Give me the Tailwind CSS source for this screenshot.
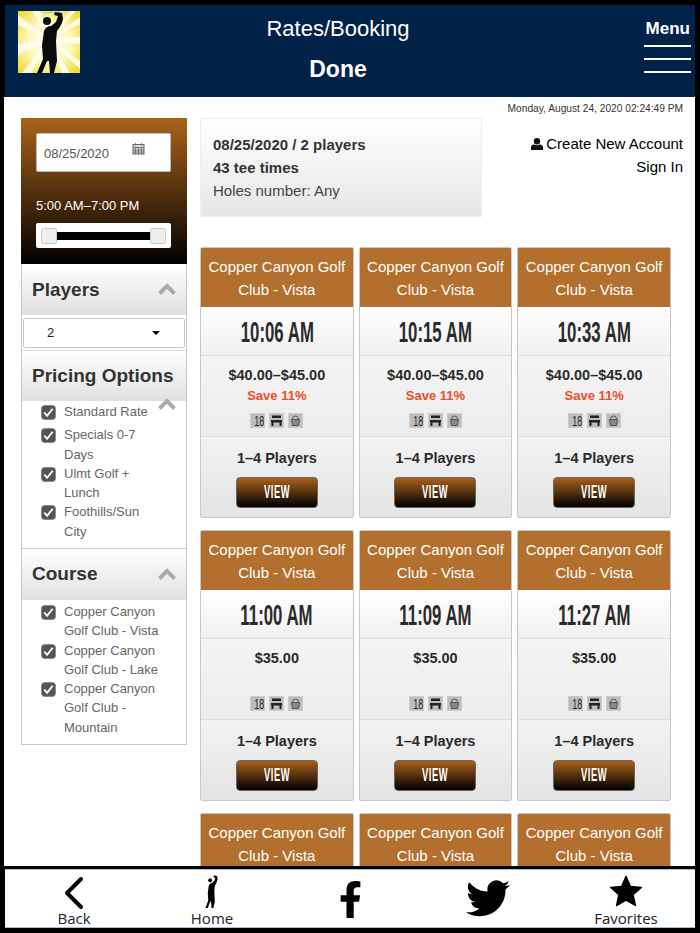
<!DOCTYPE html>
<html lang="en">
<head>
    <meta charset="UTF-8">
    <meta name="viewport" content="width=device-width, initial-scale=1.0">
    <title>Rates/Booking</title>
    <script src="https://cdn.jsdelivr.net/npm/@tailwindcss/browser@4"></script>
</head>
<body class="bg-black">
<div class="w-[700px] h-[933px] bg-black flex flex-col overflow-hidden font-['Liberation_Sans',Arial,sans-serif] pt-[5px]">

    <!-- header -->
    <header class="mx-[5px] h-[92px] shrink-0 bg-[#012249] flex justify-between text-white relative">
        <svg class="w-[62px] h-[62px] mt-[6px] ml-[13px]" viewBox="0 0 62 62">
            <defs>
                <radialGradient id="sun" cx="50%" cy="50%" r="68%">
                    <stop offset="0" stop-color="#ffffff"/>
                    <stop offset="0.5" stop-color="#fdf9c0"/>
                    <stop offset="1" stop-color="#ecd92f"/>
                </radialGradient>
            </defs>
            <rect width="62" height="62" fill="url(#sun)"/>
            <g fill="#ffffff" opacity="0.8">
                <polygon points="31,28 0,4 0,14"/>
                <polygon points="31,28 62,26 62,33"/>
                <polygon points="31,28 0,34 0,44"/>
                <polygon points="31,28 14,0 22,0"/>
                <polygon points="31,28 62,6 62,13"/>
                <polygon points="31,28 4,62 13,62"/>
                <polygon points="31,28 62,50 62,58"/>
                <polygon points="31,28 52,0 58,0"/>
                <polygon points="31,28 44,62 52,62"/>
            </g>
            <path d="M26 2 L42 1" stroke="#b8b89a" stroke-width="0.7"/>
            <circle cx="29" cy="10" r="4" fill="#0b0b0b"/>
            <path fill="#0b0b0b" d="M26 20 Q28 15 33 15 L38 11 L40 5 L36 4 L37 1 L44 2 L45 8 Q44 14 39 20 L38 30 L39 50 L36 62 L32 62 L31 50 L29 50 L24 62 L19 62 L25 48 L24 34 Z"/>
        </svg>
        <div class="absolute left-0 right-[24px] top-0 text-center">
            <div class="text-[22px] leading-[25px] mt-[11px]">Rates/Booking</div>
            <div class="text-[23px] leading-[25px] mt-[16px] font-bold">Done</div>
        </div>
        <div class="mr-[4px] mt-[15px] w-[47px] flex flex-col items-end">
            <span class="text-[17px] leading-[18px] font-bold pr-px">Menu</span>
            <span class="block w-full h-[2px] bg-white mt-[7px]"></span>
            <span class="block w-full h-[2px] bg-white mt-[11px]"></span>
            <span class="block w-full h-[2px] bg-white mt-[11px]"></span>
        </div>
    </header>

    <!-- page -->
    <main class="ml-[4px] mr-[5px] flex-1 min-h-0 bg-white overflow-hidden">
        <div class="h-[21px] pr-[12px] pt-[6px] text-right text-[10.2px] leading-[12px] text-[#333]">Monday, August 24, 2020 02:24:49 PM</div>
        <div class="flex">
            <!-- filters -->
            <aside class="ml-[17px] w-[166px] h-[627px] shrink-0 border-x border-b border-[#c8c8c8]">
                <div class="-mx-px h-[146px] pt-[15px] pl-[15px] pr-[16px] bg-linear-to-b/srgb from-[#ab621b] to-black">
                    <div class="h-[39px] bg-white rounded-[2px] border border-[#bbb] flex pl-[7px] pt-[12px] text-[13px] leading-[15px] text-[#555]">
                        <span>08/25/2020</span>
                        <svg class="w-[13px] h-[13px] ml-[23px] -mt-[4px]" viewBox="0 0 13 13" fill="none" stroke="#666">
                            <rect x="1" y="2.5" width="11" height="9.5" fill="#ddd"/>
                            <path d="M1 5.5H12M1 8H12M1 10H12M3.5 5.5V12M6.5 5.5V12M9.500 5.5V12M3.5 1V3.5M9.5 1V3.5" stroke-width="0.8"/>
                        </svg>
                    </div>
                    <div class="text-white text-[13px] leading-[15px] mt-[26px]">5:00 AM–7:00 PM</div>
                    <div class="h-[25px] mt-[10px] bg-white rounded-[2px] flex items-center px-[5px]">
                        <span class="w-[16px] h-[16px] bg-[#eee] border border-[#ccc] rounded-[2px]"></span>
                        <span class="flex-1 h-[8px] bg-black"></span>
                        <span class="w-[16px] h-[16px] bg-[#eee] border border-[#ccc] rounded-[2px]"></span>
                    </div>
                </div>

                <div class="h-[51px] bg-gradient-to-b from-white to-[#e0e0e0] flex items-center justify-between px-[10px]">
                    <h3 class="text-[19px] font-bold text-[#333] mt-[2px]">Players</h3>
                    <svg class="w-[18px] h-[12px] mb-[2px]" viewBox="0 0 18 12" fill="none" stroke="#aaa" stroke-width="4"><path d="M1.5 10.5L9 3l7.5 7.5"/></svg>
                </div>
                <div class="h-[30px] mx-px mt-[3px] bg-white border border-[#ccc] rounded-[2px] flex items-center justify-between pl-[23px] pr-[24px] text-[13px] text-[#222]">
                    <span>2</span>
                    <span class="w-0 h-0 border-x-[4px] border-x-transparent border-t-[4px] border-t-black"></span>
                </div>

                <div class="h-[51px] mt-[2px] border-t border-[#ddd] bg-gradient-to-b from-white to-[#e0e0e0] flex items-center pl-[10px]">
                    <h3 class="text-[19px] font-bold text-[#333] whitespace-nowrap">Pricing Options</h3>
                </div>
                <div class="relative h-[148px] border-b border-[#ccc] pt-[1px] text-[13px] leading-[19.3px] text-[#666]">
                    <svg class="absolute right-[10px] -top-[3px] w-[18px] h-[12px]" viewBox="0 0 18 12" fill="none" stroke="#aaa" stroke-width="4"><path d="M1.5 10.5L9 3l7.5 7.5"/></svg>
                    <label class="flex mb-[4px]"><span class="ml-[42px] w-[100px] check-label">Standard Rate</span></label>
                    <label class="flex"><span class="ml-[42px] w-[100px] check-label">Specials 0-7 Days</span></label>
                    <label class="flex"><span class="ml-[42px] w-[100px] check-label">Ulmt Golf + Lunch</span></label>
                    <label class="flex"><span class="ml-[42px] w-[100px] check-label">Foothills/Sun City</span></label>
                </div>

                <div class="h-[51px] bg-gradient-to-b from-white to-[#e0e0e0] flex items-center justify-between px-[10px]">
                    <h3 class="text-[19px] font-bold text-[#333]">Course</h3>
                    <svg class="w-[18px] h-[12px] mb-[2px]" viewBox="0 0 18 12" fill="none" stroke="#aaa" stroke-width="4"><path d="M1.5 10.5L9 3l7.5 7.5"/></svg>
                </div>
                <div class="pt-[2px] text-[13px] leading-[19.3px] text-[#666]">
                    <label class="flex"><span class="ml-[42px] w-[100px] check-label">Copper Canyon Golf Club - Vista</span></label>
                    <label class="flex"><span class="ml-[42px] w-[100px] check-label">Copper Canyon Golf Club - Lake</span></label>
                    <label class="flex"><span class="ml-[42px] w-[100px] check-label">Copper Canyon Golf Club - Mountain</span></label>
                </div>
            </aside>

            <!-- results -->
            <section class="ml-[13px] flex-1 min-w-0">
                <div class="flex justify-between pr-[12px]">
                    <div class="w-[282px] h-[99px] border border-[#eee] bg-gradient-to-b from-white to-[#e6e6e6] pl-[12px] pt-[14px] text-[15px] leading-[23px] text-[#333]">
                        <div class="font-bold">08/25/2020 / 2 players</div>
                        <div class="font-bold">43 tee times</div>
                        <div class="text-[#444]">Holes number: Any</div>
                    </div>
                    <div class="text-[15px] leading-[23px] text-black text-right pt-[14px]">
                        <div class="flex items-center justify-end gap-[3px]">
                            <svg class="w-[12px] h-[12px]" viewBox="0 0 12 12" fill="#111"><circle cx="6" cy="3.2" r="3.2"/><path d="M0 12V9.2Q0 6.8 3 6.4Q6 8 9 6.4Q12 6.8 12 9.2V12Z"/></svg>
                            <span>Create New Account</span>
                        </div>
                        <div>Sign In</div>
                    </div>
                </div>
                <div id="cards" class="grid grid-cols-3 w-[471px] gap-x-[5px] gap-y-[12px] mt-[30px]"></div>
            </section>
        </div>
    </main>

    <!-- bottom nav -->
    <nav class="h-[67px] shrink-0 border-t-[3px] border-black">
        <div class="mx-[5px] h-[59px] bg-white border-y border-[#a9bfd6] grid grid-cols-5 text-[15px] leading-[16px] text-[#222] font-['Open_Sans',sans-serif]">
            <a class="relative flex flex-col items-center justify-end pb-[1px]">
                <svg class="absolute top-[6px] w-[20px] h-[34px]" viewBox="0 0 20 34" fill="none" stroke="#000" stroke-width="4" stroke-linecap="round" stroke-linejoin="round"><path d="M17 3L3 17l14 14"/></svg>
                <span>Back</span>
            </a>
            <a class="relative flex flex-col items-center justify-end pb-[1px]">
                <svg class="absolute top-[5px] w-[14px] h-[33px]" viewBox="18 0 30 62" preserveAspectRatio="none"><circle cx="29" cy="10" r="4" fill="#000"/><path fill="#000" d="M26 20 Q28 15 33 15 L38 11 L40 5 L36 4 L37 1 L44 2 L45 8 Q44 14 39 20 L38 30 L39 50 L36 62 L32 62 L31 50 L29 50 L24 62 L19 62 L25 48 L24 34 Z"/></svg>
                <span>Home</span>
            </a>
            <a class="relative flex flex-col items-center">
                <svg class="absolute top-[11px] w-[23px] h-[37px]" viewBox="0 0 320 512" fill="#000"><path d="M279.14 288l14.22-92.66h-88.91v-60.13c0-25.35 12.42-50.06 52.24-50.06h40.42V6.26S260.43 0 225.36 0c-73.22 0-121.08 44.38-121.08 124.72v70.62H22.89V288h81.39v224h100.17V288z"/></svg>
            </a>
            <a class="relative flex flex-col items-center">
                <svg class="absolute top-[5px] w-[44px] h-[44px]" viewBox="0 0 16 16" fill="#000"><path d="M5.026 15c6.038 0 9.341-5.003 9.341-9.334 0-.14 0-.282-.006-.422A6.685 6.685 0 0 0 16 3.542a6.658 6.658 0 0 1-1.889.518 3.301 3.301 0 0 0 1.447-1.817 6.533 6.533 0 0 1-2.087.793A3.286 3.286 0 0 0 7.875 6.03a9.325 9.325 0 0 1-6.767-3.429 3.289 3.289 0 0 0 1.018 4.382A3.323 3.323 0 0 1 .64 6.575v.045a3.288 3.288 0 0 0 2.632 3.218 3.203 3.203 0 0 1-.865.115 3.23 3.23 0 0 1-.614-.057 3.283 3.283 0 0 0 3.067 2.277A6.588 6.588 0 0 1 .78 13.58a6.32 6.32 0 0 1-.78-.045A9.344 9.344 0 0 0 5.026 15z"/></svg>
            </a>
            <a class="relative flex flex-col items-center justify-end pb-[1px]">
                <svg class="absolute top-[5px] w-[34px] h-[32px]" viewBox="0 0 24 23" fill="#000" stroke="#000" stroke-linejoin="round"><path d="M12 1l3.2 7.2 7.8.8-5.9 5.2 1.7 7.7L12 18l-6.800 4 1.700-7.800L1 9l7.800-.8z"/></svg>
                <span>Favorites</span>
            </a>
        </div>
    </nav>
</div>

<script>
    const times = [
        ["10:06 AM", "$40.00–$45.00", "Save 11%"],
        ["10:15 AM", "$40.00–$45.00", "Save 11%"],
        ["10:33 AM", "$40.00–$45.00", "Save 11%"],
        ["11:00 AM", "$35.00", ""],
        ["11:09 AM", "$35.00", ""],
        ["11:27 AM", "$35.00", ""],
        ["11:36 AM", "$35.00", ""],
        ["11:45 AM", "$35.00", ""],
        ["11:54 AM", "$35.00", ""]
    ];

    const icons = `
        <div class="flex justify-center gap-[4px] mt-[auto] mb-[8px]">
            <span class="w-[15px] h-[15px] bg-[#bdbdbd] border border-[#ccc] text-[#222] text-[15px] leading-[13px] text-center overflow-hidden"><span class="inline-block scale-x-[0.6]">18</span></span>
            <span class="w-[15px] h-[15px] bg-[#bdbdbd] border border-[#ccc] flex items-center justify-center">
                <svg class="w-[11px] h-[11px]" viewBox="0 0 11 11" fill="#222"><rect x="1" y="0.5" width="9" height="2.500"/><rect x="0" y="5" width="11" height="2.500"/><rect x="0.500" y="7" width="2" height="4"/><rect x="8.500" y="7" width="2" height="4"/></svg>
            </span>
            <span class="w-[15px] h-[15px] bg-[#bdbdbd] border border-[#ccc] flex items-center justify-center">
                <svg class="w-[11px] h-[11px]" viewBox="0 0 11 11" fill="none" stroke="#555"><path d="M2.500 4Q2.500 1 5.500 1T8.500 4"/><path d="M1.500 4.500H9.500L8.500 10.500H2.500Z" fill="#888"/></svg>
            </span>
        </div>`;

    document.getElementById("cards").innerHTML = times.map(function (t) {
        return `
        <article class="h-[271px] border border-[#c8c8c8] rounded-[2px] flex flex-col overflow-hidden">
            <div class="h-[59px] shrink-0 bg-[#b26f2e] text-white text-center text-[15px] leading-[23px] pt-[7px]">Copper Canyon Golf<br>Club - Vista</div>
            <div class="h-[48px] shrink-0 bg-gradient-to-b from-white to-[#f0f0f0] flex items-center justify-center text-[30px] font-bold text-[#2a2a2a] whitespace-nowrap"><span class="inline-block scale-x-[0.56]">${t[0]}</span></div>
            <div class="h-[82px] shrink-0 border-y border-[#ddd] bg-gradient-to-b from-[#f4f4f4] to-[#ececec] flex flex-col text-center">
                <div class="text-[14.5px] leading-[18px] font-bold text-[#2a2a2a] mt-[10px]">${t[1]}</div>
                <div class="text-[13px] leading-[15px] font-bold text-[#ea4f28] mt-[4px]">${t[2]}</div>
                ${icons}
            </div>
            <div class="flex-1 bg-gradient-to-b from-[#f2f2f2] to-[#e4e4e4] flex flex-col items-center">
                <div class="text-[14.5px] leading-[18px] font-bold text-[#2a2a2a] mt-[12px]">1–4 Players</div>
                <button class="w-[82px] h-[31px] mt-[10px] rounded-[4px] border border-[#666] bg-linear-to-b/srgb from-[#a8601c] to-black text-white text-[18px] font-bold tracking-[1px]"><span class="inline-block scale-x-[0.52]">VIEW</span></button>
            </div>
        </article>`;
    }).join("");

    // checkboxes in front of each filter label
    document.querySelectorAll(".check-label").forEach(function (label) {
        const box = document.createElementNS("http://www.w3.org/2000/svg", "svg");
        box.setAttribute("viewBox", "0 0 16 16");
        box.setAttribute("class", "absolute left-[19px] top-[3px] w-[15px] h-[15px]");
        box.innerHTML = '<rect x="0.500" y="0.500" width="15" height="15" rx="3.500" fill="#555" stroke="#888"/><path d="M3.500 8l3 3.500L12.500 4" fill="none" stroke="#fff" stroke-width="2"/>';
        label.parentElement.classList.add("relative");
        label.parentElement.prepend(box);
    });
</script>
</body>
</html>
